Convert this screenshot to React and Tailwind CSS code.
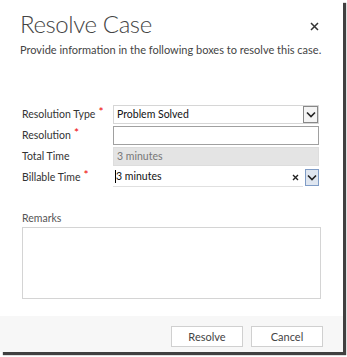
import React from 'react';

const Chevron = () => (
  <svg width="10" height="7" viewBox="0 0 10 7" fill="none">
    <path d="M1 1.5 L5 5.5 L9 1.5" stroke="#222" strokeWidth="1.6" />
  </svg>
);

const Req = () => <span className="ml-[3px] text-[#e00] text-[12px] leading-none relative -top-[3px]">*</span>;

const Row = ({ label, required, children }) => (
  <div className="flex items-center">
    <div className="w-[91px] flex items-center whitespace-nowrap text-[10.5px] text-[#333]">
      {label}
      {required && <Req />}
    </div>
    <div className="w-[206px]">{children}</div>
  </div>
);

export default function App() {
  return (
    <div className="w-[347px] h-[357px] bg-white font-['Lato',sans-serif] overflow-hidden">
      <div className="w-[343px] h-[352px] bg-white shadow-[3px_3px_1px_rgba(0,0,0,0.75)] flex flex-col">
        <div className="pl-[20px] pr-[24px] pt-[6px] flex items-start justify-between">
          <h1 className="text-[24px] font-light text-[#444] leading-[36px] tracking-[-0.4px] whitespace-nowrap">Resolve Case</h1>
          <svg className="mt-[16px]" width="9" height="9" viewBox="0 0 9 9">
            <path d="M1 1 L8 8 M8 1 L1 8" stroke="#333" strokeWidth="1.5" />
          </svg>
        </div>
        <p className="pl-[20px] text-[11px] text-[#444] leading-[16px] whitespace-nowrap">
          Provide information in the following boxes to resolve this case.
        </p>

        <div className="pl-[22px] mt-[47px] flex flex-col gap-[2px]">
          <Row label="Resolution Type" required>
            <div className="h-[19px] border border-[#d6d6d6] flex items-center justify-between pl-[3px]">
              <span className="text-[10.5px] text-[#111]">Problem Solved</span>
              <div className="w-[15px] h-[17px] border border-[#888] bg-[#f4f4f4] flex items-center justify-center">
                <Chevron />
              </div>
            </div>
          </Row>
          <Row label="Resolution" required>
            <div className="h-[19px] border border-[#a0a0a0] bg-white" />
          </Row>
          <Row label="Total Time">
            <div className="h-[19px] bg-[#e4e4e4] border border-[#ddd] flex items-center pl-[3px]">
              <span className="text-[10.5px] text-[#777]">3 minutes</span>
            </div>
          </Row>
          <Row label="Billable Time" required>
            <div className="h-[19px] flex items-center">
              <div className="flex-1 h-full flex items-center justify-between border-b border-[#e0e0e0] pl-[3px] pr-[4px]">
                <span className="text-[10.5px] text-[#111] relative">
                  <span className="absolute left-[-1px] top-[1px] w-px h-[13px] bg-black" />
                  3 minutes
                </span>
                <svg width="7" height="7" viewBox="0 0 7 7">
                  <path d="M1 1 L6 6 M6 1 L1 6" stroke="#222" strokeWidth="1.4" />
                </svg>
              </div>
              <div className="w-[14px] h-[17px] ml-[2px] border border-[#7f9cc6] bg-[#dfe6f0] flex items-center justify-center">
                <Chevron />
              </div>
            </div>
          </Row>
        </div>

        <div className="pl-[22px] mt-[24px]">
          <div className="text-[10.5px] text-[#555] leading-[14px]">Remarks</div>
          <div className="mt-[2px] w-[299px] h-[72px] border border-[#d4d4d4]" />
        </div>

        <div className="mt-auto h-[36px] bg-[#f7f7f7] flex justify-end items-start pt-[10px] pr-[20px] gap-[8px]">
          <button className="w-[72px] h-[21px] border border-[#d0d0d0] bg-white text-[11px] text-[#444] leading-none">Resolve</button>
          <button className="w-[72px] h-[21px] border border-[#d0d0d0] bg-white text-[11px] text-[#444] leading-none">Cancel</button>
        </div>
      </div>
    </div>
  );
}
